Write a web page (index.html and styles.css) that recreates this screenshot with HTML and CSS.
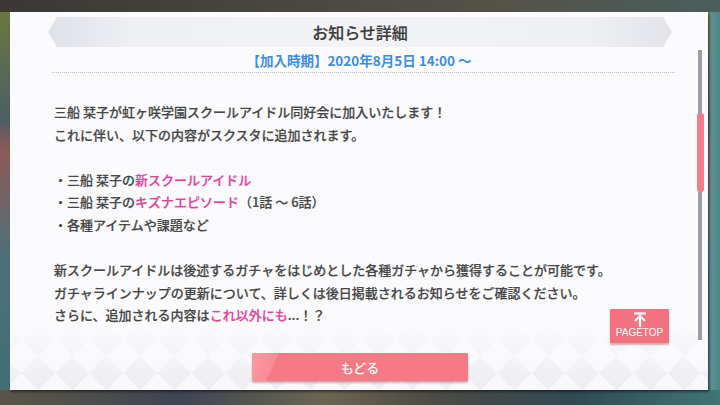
FILE: index.html
```html
<!DOCTYPE html>
<html lang="ja">
<head>
  <meta charset="UTF-8" />
  <meta name="viewport" content="width=device-width, initial-scale=1.0" />
  <title>お知らせ詳細</title>
  <link rel="stylesheet" href="styles.css">
</head>
<body>
  <!-- お知らせ詳細パネル -->
  <div class="panel">
    <div class="banner"><h1>お知らせ詳細</h1></div>
    <p class="period">【加入時期】2020年8月5日 14:00 ～</p>
    <div class="rule"></div>

    <div class="body">
      <p>三船 栞子が虹ヶ咲学園スクールアイドル同好会に加入いたします！<br>これに伴い、以下の内容がスクスタに追加されます。</p>
      <ul>
        <li>・三船 栞子の<span class="hl">新スクールアイドル</span></li>
        <li>・三船 栞子の<span class="hl">キズナエピソード</span>（1話 ～ 6話）</li>
        <li>・各種アイテムや課題など</li>
      </ul>
      <p>新スクールアイドルは後述するガチャをはじめとした各種ガチャから獲得することが可能です。<br>ガチャラインナップの更新について、詳しくは後日掲載されるお知らせをご確認ください。<br>さらに、追加される内容は<span class="hl">これ以外にも</span>...！？</p>
    </div>

    <div class="footer">
      <button class="back">もどる</button>
    </div>

    <!-- スクロールバーとページトップ -->
    <div class="scrollbar"><div class="thumb"></div></div>
    <button class="pagetop">
      <svg width="14" height="15" viewBox="0 0 14 15">
        <path d="M1 1.5H13" stroke="#fff" stroke-width="2.2" fill="none"/>
        <path d="M2 9L7 4L12 9M7 4V15" stroke="#fff" stroke-width="2.2" fill="none"/>
      </svg>
      <span>PAGETOP</span>
    </button>
  </div>
</body>
</html>
```

FILE: styles.css
```css
/* 背景（ぼかしたゲーム画面） */
* {
  box-sizing: border-box;
}
html, body {
  margin: 0;
  width: 720px;
  height: 405px;
  overflow: hidden;
}
body {
  padding: 12px 12px 15px 10px;
  font-family: "Noto Sans CJK JP", "Noto Sans", sans-serif;
  color: #474747;
  background:
    linear-gradient(to right, #3a3834 0, #4a4741 40%, #55524a 70%, #4a5e5c 100%) top / 100% 12px no-repeat,
    linear-gradient(to right, #5a5646 0, #3f4452 25%, #6a6650 45%, #4c4a44 60%, #2f4a52 80%, #3f7676 100%) bottom / 100% 15px no-repeat,
    linear-gradient(to left, #4a8585 0, #5e9090 8px, transparent 12px),
    linear-gradient(to bottom, #6e7a3c 0, #4d5e66 120px, #8c5a56 150px, #4e6f7a 260px, #3f6f74 405px);
}

/* パネル本体 */
.panel {
  position: relative;
  display: flex;
  flex-direction: column;
  width: 698px;
  height: 378px;
  background:
    linear-gradient(to bottom, #fbfbfd 0, #fbfbfd 310px, rgba(251,251,253,0.6) 352px, rgba(251,251,253,0.3) 378px),
    repeating-conic-gradient(from 45deg, #e6e6ec 0 25%, #f7f7fa 0 50%) -6px 4px / 34px 34px;
  box-shadow: 1px 2px 2px rgba(0,0,0,0.45);
}

/* タイトル帯 */
.banner {
  display: flex;
  align-items: center;
  justify-content: center;
  height: 30px;
  margin: 5px 36px 0 38px;
  background: linear-gradient(to right, #dfe1e8 0, #eef0f4 14%, #f2f3f7 50%, #eef0f4 86%, #e2e4ea 100%);
  clip-path: polygon(0 50%, 9px 0, calc(100% - 9px) 0, 100% 50%, calc(100% - 9px) 100%, 9px 100%);
}
.banner h1 {
  margin: 0;
  font-size: 16px;
  font-weight: 500;
  color: #3c3c3c;
  line-height: 1;
  -webkit-text-stroke: 0.2px #3c3c3c;
}
.period {
  margin: 4px 0 0;
  text-align: center;
  font-size: 13.5px;
  line-height: 18px;
  font-weight: 700;
  color: #3d8de2;
}
.rule {
  margin: 3px 33px 0 42px;
  border-top: 1px dotted #c2c2cb;
}

/* 本文 */
.body {
  margin-top: 28px;
  padding-left: 44px;
  font-size: 13px;
  line-height: 22.6px;
  font-weight: 500;
  -webkit-text-stroke: 0.2px currentColor;
}
.body p,
.body ul {
  margin: 0 0 22.6px;
  padding: 0;
  list-style: none;
}
.hl {
  color: #e4409a;
}

/* もどるボタン */
.footer {
  margin-top: auto;
  padding-bottom: 9px;
  display: flex;
  justify-content: center;
}
.back {
  width: 216px;
  height: 28px;
  margin-left: 2px;
  border: 0;
  border-radius: 1px;
  font-family: inherit;
  font-size: 13px;
  font-weight: 500;
  color: #fff;
  background: linear-gradient(115deg, #f99aa2 0, #f78d96 24px, #f57a86 25px, #f57a86 100%);
  box-shadow: 0 2px 2px rgba(120,40,50,0.35);
}

/* スクロールバー */
.scrollbar {
  position: absolute;
  left: 688px;
  top: 38px;
  width: 4px;
  height: 290px;
  background: #9e9eaa;
}
.thumb {
  position: absolute;
  left: -1px;
  top: 63px;
  width: 7px;
  height: 79px;
  border-radius: 3px;
  background: #f47d89;
}

/* ページトップボタン */
.pagetop {
  position: absolute;
  left: 600px;
  top: 297px;
  width: 59px;
  height: 34px;
  padding: 3px 0 0;
  border: 0;
  border-radius: 1px;
  display: flex;
  flex-direction: column;
  align-items: center;
  background: #f2737f;
  box-shadow: 0 2px 2px rgba(120,40,50,0.35);
  color: #fff;
}
.pagetop span {
  margin-top: 1px;
  font-family: "Liberation Sans", Arial, sans-serif;
  font-size: 10px;
  line-height: 10px;
}
```
